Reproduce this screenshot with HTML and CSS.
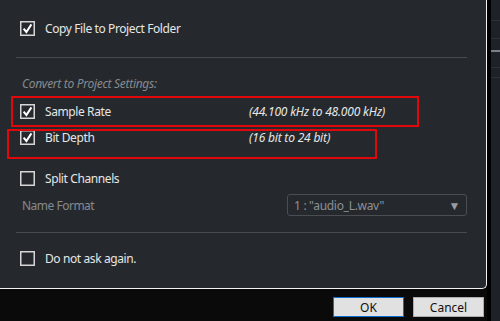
FILE: index.html
```html
<!DOCTYPE html>
<html>
<head lang="en">
    <meta charset="UTF-8">
    <title>Import Options</title>
    <link rel="stylesheet" href="styles.css">
</head>
<body>
<div class="screen">
    <div class="main">
        <div class="dialog">
            <div class="row row-copy">
                <svg class="box" width="15" height="15" viewBox="0 0 15 15"><rect x="0.75" y="0.75" width="13.5" height="13.5" fill="none" stroke="#d6d6d6" stroke-width="1.5"/><path d="M3.6 7.6 L6.4 11 L11.4 3.4" fill="none" stroke="#fff" stroke-width="2"/></svg>
                <span class="name">Copy File to Project Folder</span>
            </div>
            <div class="sep"></div>
            <div class="caption">Convert to Project Settings:</div>
            <div class="row row-rate">
                <svg class="box" width="15" height="15" viewBox="0 0 15 15"><rect x="0.75" y="0.75" width="13.5" height="13.5" fill="none" stroke="#d6d6d6" stroke-width="1.5"/><path d="M3.6 7.6 L6.4 11 L11.4 3.4" fill="none" stroke="#fff" stroke-width="2"/></svg>
                <span class="name">Sample Rate</span>
                <span class="detail">(44.100 kHz to 48.000 kHz)</span>
            </div>
            <div class="row row-depth">
                <svg class="box" width="15" height="15" viewBox="0 0 15 15"><rect x="0.75" y="0.75" width="13.5" height="13.5" fill="none" stroke="#d6d6d6" stroke-width="1.5"/><path d="M3.6 7.6 L6.4 11 L11.4 3.4" fill="none" stroke="#fff" stroke-width="2"/></svg>
                <span class="name">Bit Depth</span>
                <span class="detail">(16 bit to 24 bit)</span>
            </div>
            <div class="row row-split">
                <svg class="box" width="15" height="15" viewBox="0 0 15 15"><rect x="0.75" y="0.75" width="13.5" height="13.5" fill="none" stroke="#d6d6d6" stroke-width="1.5"/></svg>
                <span class="name">Split Channels</span>
            </div>
            <div class="format">
                <span class="caption-inline">Name Format</span>
                <div class="select">
                    <span>1 : "audio_L.wav"</span>
                    <span class="arrow">&#9660;</span>
                </div>
            </div>
            <div class="sep sep-low"></div>
            <div class="row row-ask">
                <svg class="box" width="15" height="15" viewBox="0 0 15 15"><rect x="0.75" y="0.75" width="13.5" height="13.5" fill="none" stroke="#d6d6d6" stroke-width="1.5"/></svg>
                <span class="name">Do not ask again.</span>
            </div>

            <!-- red markings drawn over the screenshot -->
            <div class="mark mark-rate"></div>
            <div class="mark mark-depth"></div>
        </div>
        <div class="actions">
            <button class="btn btn-default">OK</button>
            <button class="btn">Cancel</button>
        </div>
    </div>
    <div class="side">
        <div class="line l1"></div>
        <div class="line l2"></div>
        <div class="line l3"></div>
        <div class="line l4"></div>
        <div class="line l5"></div>
    </div>
</div>
</body>
</html>
```

FILE: styles.css
```css
*{
    margin: 0;
    padding: 0;
    box-sizing: border-box;
}
body {
    background: #0a0a0a;
    font: 12px "Noto Sans", "Open Sans", sans-serif;
    letter-spacing: -0.3px;
    color: #e6e6e6;
    width: 500px;
    height: 321px;
    overflow: hidden;
}
.screen {
    display: flex;
    height: 321px;
}
.main {
    width: 487px;
}
.dialog {
    position: relative;
    height: 289px;
    background: #25292d;
    border-right: 1px solid #f2f2f2;
    border-bottom: 1px solid #f2f2f2;
    border-bottom-right-radius: 5px;
}
.row {
    display: flex;
    align-items: center;
    padding-left: 20px;
    height: 26px;
}
.box {
    flex: none;
    margin-right: 10px;
}
.name {
    width: 204px;
    letter-spacing: -0.4px;
}
.detail {
    font-style: italic;
    letter-spacing: -0.2px;
}
.row-copy {
    height: 57px;
}
.sep {
    height: 1px;
    margin: 0 19px 0 16px;
    background: #474a4f;
}
.caption {
    margin-top: 14px;
    height: 24px;
    line-height: 24px;
    padding-left: 22px;
    font-style: italic;
    color: #878a8f;
}
.row-rate {
    margin-top: 2px;
}
.row-split {
    margin-top: 15px;
}
.format {
    display: flex;
    align-items: center;
    justify-content: space-between;
    margin: 3px 19px 0 22px;
    height: 22px;
}
.caption-inline {
    color: #878a8f;
    letter-spacing: -0.5px;
}
.select {
    display: flex;
    align-items: center;
    justify-content: space-between;
    width: 180px;
    height: 22px;
    padding: 0 6px 0 6px;
    border: 1px solid #4a4d52;
    border-radius: 3px;
    color: #8d9095;
}
.arrow {
    font-size: 12px;
    color: #9a9da1;
}
.sep-low {
    margin-top: 16px;
}
.row-ask {
    margin-top: 12px;
    height: 27px;
}
.mark {
    position: absolute;
    border: 2px solid #e0080b;
}
.mark-rate {
    left: 11px;
    top: 96px;
    width: 408px;
    height: 31px;
}
.mark-depth {
    left: 7px;
    top: 129px;
    width: 370px;
    height: 30px;
}
.actions {
    display: flex;
    justify-content: flex-end;
    gap: 9px;
    padding: 8px 3px 0 0;
}
.btn {
    width: 71px;
    height: 20px;
    background: #e1e1e1;
    border: 1px solid #adadad;
    font: 12px "Noto Sans", sans-serif;
    color: #111;
}
.btn-default {
    border-color: #0a6fd0;
}
.side {
    width: 13px;
    background: #1e2228;
    border-left: 4px solid #000;
}
.line {
    height: 1px;
    background: #2c3138;
}
.l1 { margin-top: 20px; }
.l2 { margin-top: 17px; }
.l3 { margin-top: 11px; height: 2px; background: #7a8088; }
.l4 { margin-top: 15px; }
.l5 { margin-top: 9px; }
```
